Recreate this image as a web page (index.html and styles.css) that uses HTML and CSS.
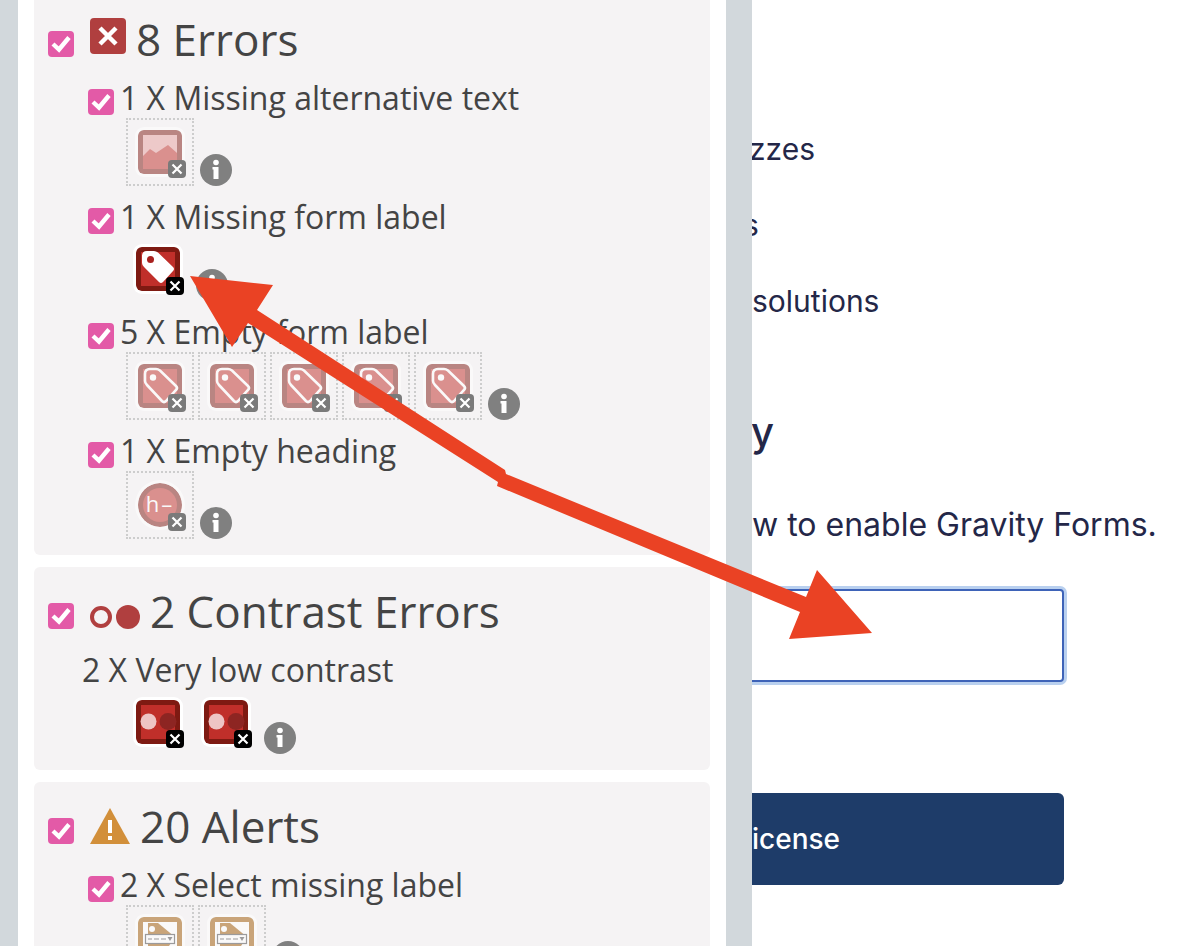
FILE: index.html
```html
<!DOCTYPE html>
<html lang="en">
<head>
    <meta charset="UTF-8">
    <title>Accessibility summary</title>
    <link rel="stylesheet" href="styles.css">
</head>
<body>
    <svg class="defs" width="0" height="0">
        <symbol id="tick" viewBox="0 0 26 26">
            <path d="M5 13l6 5.500 10-12" fill="none" stroke="#fff" stroke-width="4.400"/>
        </symbol>
        <symbol id="cross" viewBox="0 0 18 18">
            <path d="M4.500 4.500l9 9M13.500 4.500l-9 9" stroke="#fff" stroke-width="2.200"/>
        </symbol>
        <symbol id="info" viewBox="0 0 32 32">
            <circle cx="16" cy="16" r="16" fill="#808080"/>
            <circle cx="16" cy="8.500" r="2.800" fill="#fff"/>
            <path d="M12.500 13h6v12h-5V15.500h-1z" fill="#fff"/>
        </symbol>
        <symbol id="img-alt" viewBox="0 0 44 44">
            <rect width="44" height="44" rx="5" fill="#7e1a12"/>
            <rect x="5" y="5" width="34" height="34" fill="#e6a0a0"/>
            <path d="M5 26l7-7 6 4 12-8 9 8v16H5z" fill="#c02f2a"/>
        </symbol>
        <symbol id="tag-solid" viewBox="0 0 44 44">
            <rect width="44" height="44" rx="5" fill="#7e1a12"/>
            <rect x="5" y="5" width="34" height="34" fill="#c02f2a"/>
            <path d="M11 4h7q2 0 4 1.500L37 20q2 2 0 4L27 35q-2 2-4 0L8 20q-2-2-2-4V9q0-5 5-5z" fill="#fff"/>
            <circle cx="14.500" cy="12.500" r="3.500" fill="#a8201e"/>
        </symbol>
        <symbol id="tag-line" viewBox="0 0 44 44">
            <rect width="44" height="44" rx="5" fill="#7e1a12"/>
            <rect x="5" y="5" width="34" height="34" fill="#c02f2a"/>
            <path d="M12 5h6q2 0 4 1.500L38 22q2 2 0 4L28 37q-2 2-4 0L9 21q-2-2-2-4v-7q0-5 5-5z" fill="none" stroke="#fff" stroke-width="2.600"/>
            <circle cx="15" cy="13.500" r="3.200" fill="#fff"/>
        </symbol>
        <symbol id="contrast" viewBox="0 0 44 44">
            <rect width="44" height="44" rx="5" fill="#7e1a12"/>
            <rect x="5" y="5" width="34" height="34" fill="#c02f2a"/>
            <circle cx="12.500" cy="21.500" r="8" fill="#eec4c4"/>
            <circle cx="32" cy="21.500" r="8.500" fill="#8d2522"/>
        </symbol>
        <symbol id="select" viewBox="0 0 44 44">
            <rect width="44" height="44" rx="5" fill="#9e5800"/>
            <rect x="5" y="5" width="34" height="34" fill="#fff"/>
            <path d="M10 6l10 0 17 14-8 12H10z" fill="#9e5800"/>
            <circle cx="14" cy="12" r="3" fill="#fff"/>
            <rect x="7.500" y="17.500" width="29" height="9" fill="#fff" stroke="#444" stroke-width="1.200"/>
            <path d="M10 22h4m2 0h5m2 0h5" stroke="#444" stroke-width="1.200"/>
            <path d="M29.500 20h5l-2.500 4z" fill="#444"/>
        </symbol>
    </svg>

    <div class="page">
        <aside class="sidebar">
            <section class="card card-first">
                <h2 class="head">
                    <span class="check"><svg><use href="#tick"/></svg></span>
                    <svg class="error-icon" viewBox="0 0 36 36"><rect width="36" height="36" rx="4" fill="#b03f3f"/><path d="M10 10l16 16M26 10L10 26" stroke="#fff" stroke-width="4.500"/></svg>
                    <span>8 Errors</span>
                </h2>
                <div class="group">
                    <div class="label"><span class="check"><svg><use href="#tick"/></svg></span><span>1 X Missing alternative text</span></div>
                    <div class="row">
                        <div class="thumb dim"><svg class="ico"><use href="#img-alt"/></svg><svg class="badge"><use href="#cross"/></svg></div>
                        <svg class="info"><use href="#info"/></svg>
                    </div>
                </div>
                <div class="group">
                    <div class="label"><span class="check"><svg><use href="#tick"/></svg></span><span>1 X Missing form label</span></div>
                    <div class="row">
                        <div class="thumb"><svg class="ico"><use href="#tag-solid"/></svg><svg class="badge"><use href="#cross"/></svg></div>
                        <svg class="info"><use href="#info"/></svg>
                    </div>
                </div>
                <div class="group">
                    <div class="label"><span class="check"><svg><use href="#tick"/></svg></span><span>5 X Empty form label</span></div>
                    <div class="row">
                        <div class="thumb dim"><svg class="ico"><use href="#tag-line"/></svg><svg class="badge"><use href="#cross"/></svg></div>
                        <div class="thumb dim"><svg class="ico"><use href="#tag-line"/></svg><svg class="badge"><use href="#cross"/></svg></div>
                        <div class="thumb dim"><svg class="ico"><use href="#tag-line"/></svg><svg class="badge"><use href="#cross"/></svg></div>
                        <div class="thumb dim"><svg class="ico"><use href="#tag-line"/></svg><svg class="badge"><use href="#cross"/></svg></div>
                        <div class="thumb dim"><svg class="ico"><use href="#tag-line"/></svg><svg class="badge"><use href="#cross"/></svg></div>
                        <svg class="info"><use href="#info"/></svg>
                    </div>
                </div>
                <div class="group last">
                    <div class="label"><span class="check"><svg><use href="#tick"/></svg></span><span>1 X Empty heading</span></div>
                    <div class="row">
                        <div class="thumb dim">
                            <svg class="ico round" viewBox="0 0 44 44">
                                <circle cx="22" cy="22" r="22" fill="#7e1a12"/>
                                <circle cx="22" cy="22" r="17" fill="#c02f2a"/>
                                <text x="22" y="29" text-anchor="middle" font-family="Open Sans" font-size="22" letter-spacing="2" fill="#fff">h&#8211;</text>
                            </svg>
                            <svg class="badge"><use href="#cross"/></svg>
                        </div>
                        <svg class="info"><use href="#info"/></svg>
                    </div>
                </div>
            </section>

            <section class="card">
                <h2 class="head">
                    <span class="check"><svg><use href="#tick"/></svg></span>
                    <svg class="contrast-icon" viewBox="0 0 50 24"><circle cx="11" cy="12" r="9" fill="none" stroke="#b03f3f" stroke-width="4"/><circle cx="38" cy="12" r="12" fill="#b03f3f"/></svg>
                    <span>2 Contrast Errors</span>
                </h2>
                <div class="group plain last">
                    <div class="label"><span>2 X Very low contrast</span></div>
                    <div class="row">
                        <div class="thumb"><svg class="ico"><use href="#contrast"/></svg><svg class="badge"><use href="#cross"/></svg></div>
                        <div class="thumb"><svg class="ico"><use href="#contrast"/></svg><svg class="badge"><use href="#cross"/></svg></div>
                        <svg class="info"><use href="#info"/></svg>
                    </div>
                </div>
            </section>

            <section class="card">
                <h2 class="head">
                    <span class="check"><svg><use href="#tick"/></svg></span>
                    <svg class="alert-icon" viewBox="0 0 40 36"><path d="M20 0l20 36H0z" fill="#d28f3a"/><path d="M18 12h4v13h-4zM18 28h4v4h-4z" fill="#fff"/></svg>
                    <span>20 Alerts</span>
                </h2>
                <div class="group">
                    <div class="label"><span class="check"><svg><use href="#tick"/></svg></span><span>2 X Select missing label</span></div>
                    <div class="row">
                        <div class="thumb dim"><svg class="ico"><use href="#select"/></svg><svg class="badge"><use href="#cross"/></svg></div>
                        <div class="thumb dim"><svg class="ico"><use href="#select"/></svg><svg class="badge"><use href="#cross"/></svg></div>
                        <svg class="info"><use href="#info"/></svg>
                    </div>
                </div>
            </section>
        </aside>

        <main class="main">
            <p class="line first">zzes</p>
            <p class="line short">s</p>
            <p class="line">solutions</p>
            <h3 class="title">y</h3>
            <p class="intro">w to enable Gravity Forms.</p>
            <input class="key" type="text" aria-label="License key">
            <button class="submit" type="button">icense</button>
        </main>
    </div>

    <svg class="arrow" viewBox="0 0 1192 946">
        <polygon points="190,276 273,285 257,310 505,470 506,474 806,597 817,570 872,633 789,639 800,612 497,486 498,482 248,323 232,347" fill="#ea4224"/>
    </svg>
</body>
</html>
```

FILE: styles.css
```css
* {
    margin: 0;
    padding: 0;
    box-sizing: border-box;
}

html, body {
    height: 946px;
    overflow: hidden;
    background: #fff;
}

.defs {
    position: absolute;
}

.page {
    display: flex;
    height: 946px;
}

/* left panel */
.sidebar {
    flex: 0 0 752px;
    height: 946px;
    overflow: hidden;
    padding: 0 16px;
    border-left: 18px solid #d2d8dc;
    border-right: 26px solid #d2d8dc;
    font-family: 'Open Sans', sans-serif;
    color: #444;
}

.card {
    background: #f5f3f4;
    border-radius: 6px;
    padding: 15px 14px 16px;
    margin-bottom: 12px;
}

.card-first {
    margin-top: -5px;
}

.head {
    display: flex;
    align-items: center;
    height: 60px;
    padding-bottom: 2px;
    margin-bottom: 8px;
    font-size: 44px;
    font-weight: 400;
}

.head .check {
    margin: 10px 16px 0 0;
}

.error-icon {
    width: 36px;
    height: 36px;
    margin: -6px 10px 0 0;
}

.contrast-icon {
    width: 50px;
    height: 24px;
    margin: 12px 10px 0 0;
}

.alert-icon {
    width: 40px;
    height: 36px;
    margin: 0 10px 0 0;
}

.check {
    flex: none;
    display: block;
    width: 26px;
    height: 26px;
    background: #e35aa7;
    border-radius: 4px;
}

.check svg {
    display: block;
    width: 26px;
    height: 26px;
}

.group {
    padding-left: 40px;
    margin-bottom: 11px;
}

.group.last {
    margin-bottom: 0;
}

.group.plain {
    padding-left: 34px;
}

.group.plain .row {
    margin-left: 44px;
}

.label {
    display: flex;
    align-items: center;
    gap: 6px;
    height: 40px;
    padding-bottom: 2px;
    font-size: 32px;
    white-space: nowrap;
}

.label .check {
    margin-top: 10px;
}

.row {
    display: flex;
    align-items: flex-end;
    gap: 4px;
    margin-left: 38px;
}

.thumb {
    position: relative;
    width: 64px;
    height: 64px;
    padding: 10px;
}

.thumb.dim {
    width: 68px;
    height: 68px;
    border: 2px dotted #cdcdcd;
}

.thumb.dim .ico {
    opacity: 0.5;
}

.thumb.dim .badge {
    background: #7a7a7a;
}

.ico {
    display: block;
    width: 44px;
    height: 44px;
    border-radius: 6px;
    box-shadow: 0 0 0 3px #fff;
}

.ico.round {
    border-radius: 50%;
}

.badge {
    position: absolute;
    right: 6px;
    bottom: 6px;
    width: 18px;
    height: 18px;
    background: #000;
    border-radius: 4px;
}

.info {
    flex: none;
    width: 32px;
    height: 32px;
    margin-left: 2px;
}

/* page behind the panel */
.main {
    flex: 1;
    height: 946px;
    overflow: hidden;
    font-family: Inter, sans-serif;
    color: #242748;
    font-size: 30px;
}

.line {
    height: 40px;
    line-height: 40px;
    margin-bottom: 36px;
    white-space: nowrap;
}

.line.first {
    margin-top: 129px;
    margin-left: -3px;
}

.line.short {
    margin-left: -9px;
}

.title {
    font-size: 40px;
    font-weight: 500;
    line-height: 50px;
    margin-top: 86px;
    margin-left: -1px;
}

.intro {
    height: 40px;
    line-height: 40px;
    margin-top: 48px;
    font-size: 32px;
    white-space: nowrap;
}

.key {
    display: block;
    width: 332px;
    height: 93px;
    margin: 44px 0 0 -20px;
    border: 2px solid #3e63b8;
    border-radius: 4px;
    box-shadow: 0 0 0 3px #b9d0ef;
    outline: none;
}

.submit {
    display: block;
    width: 332px;
    height: 92px;
    margin: 111px 0 0 -20px;
    padding-left: 20px;
    border: none;
    border-radius: 6px;
    background: #1e3c69;
    color: #fff;
    font: 500 28px Inter, sans-serif;
    text-align: left;
}

/* annotation on top of the screenshot */
.arrow {
    position: absolute;
    left: 0;
    top: 0;
    width: 1192px;
    height: 946px;
    pointer-events: none;
}
```
